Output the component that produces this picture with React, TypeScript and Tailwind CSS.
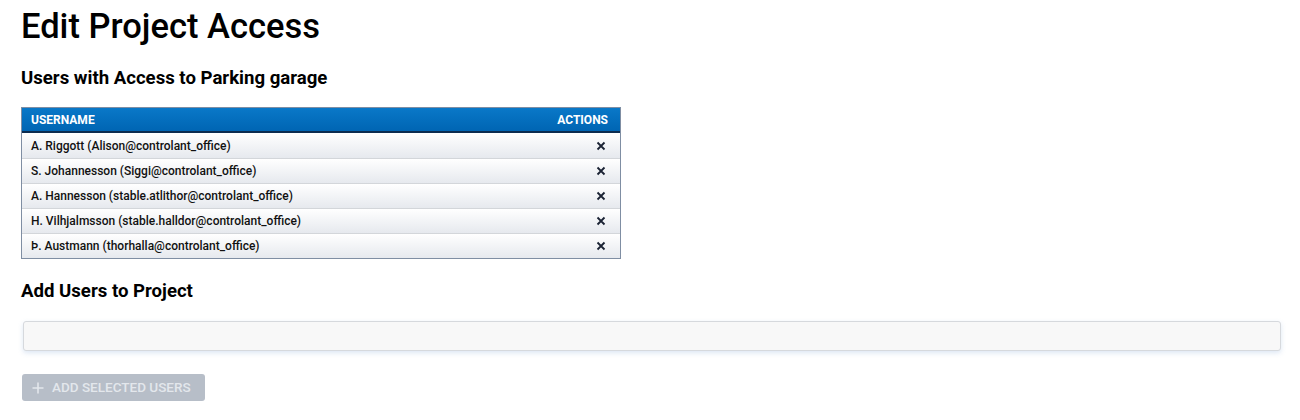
import React from "react";

const users = [
  "A. Riggott (Alison@controlant_office)",
  "S. Johannesson (Siggi@controlant_office)",
  "A. Hannesson (stable.atlithor@controlant_office)",
  "H. Vilhjalmsson (stable.halldor@controlant_office)",
  "Þ. Austmann (thorhalla@controlant_office)",
];

export default function App() {
  return (
    <div
      className="min-h-screen bg-white pl-[21px] pr-[19px] pt-[4px] text-black"
      style={{ fontFamily: "Roboto, 'Liberation Sans', sans-serif" }}
    >
      <h1 className="text-[34.5px] leading-[44px] font-medium">Edit Project Access</h1>
      <h2 className="mt-[18px] text-[18.6px] leading-[24px] font-bold">
        Users with Access to Parking garage
      </h2>

      <div className="mt-[17px] w-[600px] border border-[#7f8ea3]">
        <div className="flex h-[25px] items-center justify-between border-b-2 border-[#0d2c4f] bg-gradient-to-b from-[#0a78c8] to-[#0065b3] pl-[9px] pr-[12px] text-[12px] font-bold text-white">
          <span>USERNAME</span>
          <span>ACTIONS</span>
        </div>
        {users.map((u, i) => (
          <div
            key={u}
            className={
              "flex h-[25px] items-center justify-between bg-gradient-to-b from-white to-[#e6e9ee] pl-[9px] pr-[14px] text-[12px] font-medium text-[#111]" +
              (i > 0 ? " border-t border-[#d3d6da]" : "")
            }
          >
            <span>{u}</span>
            <svg width="10" height="10" viewBox="0 0 10 10" className="text-[#1a2233]">
              <path d="M1.5 1.5 L8.5 8.5 M8.5 1.5 L1.5 8.5" stroke="currentColor" strokeWidth="1.8" />
            </svg>
          </div>
        ))}
      </div>

      <h2 className="mt-[20px] text-[18.6px] leading-[24px] font-bold">Add Users to Project</h2>

      <div className="mt-[18px] ml-[2px] h-[30px] rounded-[3px] border border-[#d6d9dd] bg-[#f8f8f8] shadow-[0_2px_5px_rgba(120,160,210,0.25)]" />

      <button
        disabled
        className="mt-[23px] ml-[1px] flex h-[27px] w-[183px] items-center gap-[8px] rounded-[3px] bg-[#b7bec8] px-[10px] text-[13.5px] font-medium text-[#e3e7ec]"
      >
        <svg width="12" height="12" viewBox="0 0 12 12">
          <path d="M6 0.5 V11.5 M0.5 6 H11.5" stroke="currentColor" strokeWidth="1.6" />
        </svg>
        <span>ADD SELECTED USERS</span>
      </button>
    </div>
  );
}
